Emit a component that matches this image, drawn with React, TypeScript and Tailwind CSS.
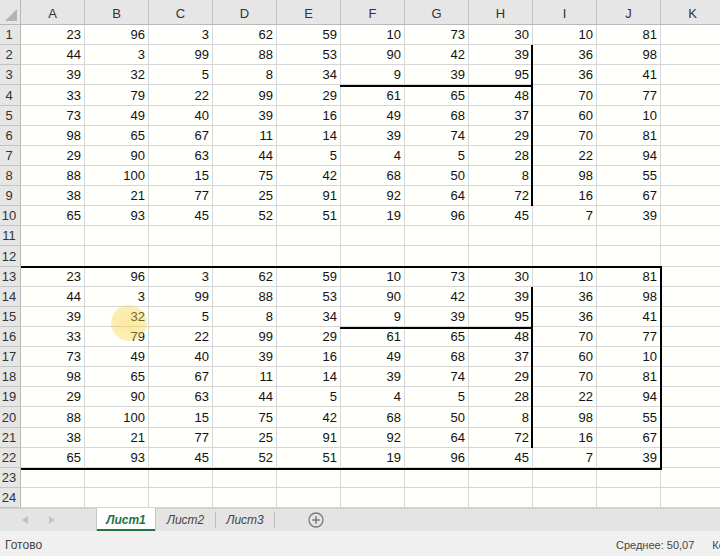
import React from "react";

const block: number[][] = [
  [23, 96, 3, 62, 59, 10, 73, 30, 10, 81],
  [44, 3, 99, 88, 53, 90, 42, 39, 36, 98],
  [39, 32, 5, 8, 34, 9, 39, 95, 36, 41],
  [33, 79, 22, 99, 29, 61, 65, 48, 70, 77],
  [73, 49, 40, 39, 16, 49, 68, 37, 60, 10],
  [98, 65, 67, 11, 14, 39, 74, 29, 70, 81],
  [29, 90, 63, 44, 5, 4, 5, 28, 22, 94],
  [88, 100, 15, 75, 42, 68, 50, 8, 98, 55],
  [38, 21, 77, 25, 91, 92, 64, 72, 16, 67],
  [65, 93, 45, 52, 51, 19, 96, 45, 7, 39],
];

const cols = ["A", "B", "C", "D", "E", "F", "G", "H", "I", "J", "K"];

function rowData(r: number): (number | null)[] {
  if (r >= 1 && r <= 10) return [...block[r - 1], null];
  if (r >= 13 && r <= 22) return [...block[r - 13], null];
  return Array(11).fill(null);
}

export default function App() {
  const rows = Array.from({ length: 24 }, (_, i) => i + 1);
  return (
    <div className="w-[720px] h-[556px] overflow-hidden flex flex-col bg-[#fffffb] font-['Liberation_Sans',Arial,sans-serif]">
      <div className="relative h-[508px] flex-none overflow-hidden">
        <div className="flex h-[25px] w-[800px]">
          <div className="relative w-[21px] flex-none bg-[#e6e6e6] border-r border-b border-[#b8b8b8]">
            <svg className="absolute right-[3px] bottom-[3px]" width="12" height="12" viewBox="0 0 12 12">
              <polygon points="12,0 12,12 0,12" fill="#b4b4b4" />
            </svg>
          </div>
          {cols.map((c) => (
            <div
              key={c}
              className="w-[64px] flex-none bg-[#e6e6e6] border-r border-b border-[#c4c4c4] border-b-[#b8b8b8] flex items-end justify-center pb-[3px] text-[13px] leading-[15px] text-[#333]"
            >
              {c}
            </div>
          ))}
        </div>
        {rows.map((r) => (
          <div key={r} className="flex h-[20.125px] w-[800px]">
            <div className="w-[21px] flex-none bg-[#e6e6e6] border-r border-b border-[#c4c4c4] border-r-[#b8b8b8] flex items-end justify-center pr-[2px] pb-[2px] text-[13px] leading-[15px] text-[#333]">
              {r}
            </div>
            {rowData(r).map((v, i) => (
              <div
                key={i}
                className="w-[64px] flex-none border-r border-b border-[#d6d6d6] flex items-end justify-end pr-[3px] pb-[2px] text-[13px] leading-[15px] text-[#111]"
              >
                {v === null ? "" : v}
              </div>
            ))}
          </div>
        ))}

        {/* thick borders, top block */}
        <div className="absolute left-[340px] top-[85px] w-[193px] h-[2px] bg-black" />
        <div className="absolute left-[531px] top-[45px] w-[2px] h-[161px] bg-black" />

        {/* thick borders, bottom block */}
        <div className="absolute left-[21px] top-[266px] w-[641px] h-[2px] bg-black" />
        <div className="absolute left-[660px] top-[266px] w-[2px] h-[204px] bg-black" />
        <div className="absolute left-[21px] top-[468px] w-[641px] h-[2px] bg-black" />
        <div className="absolute left-[340px] top-[327px] w-[193px] h-[2px] bg-black" />
        <div className="absolute left-[531px] top-[287px] w-[2px] h-[161px] bg-black" />

        {/* pointer highlight */}
        <div className="absolute left-[111px] top-[305px] w-[36px] h-[36px] rounded-full bg-[radial-gradient(circle,rgba(248,210,70,0.5)_0%,rgba(248,210,70,0.38)_65%,rgba(248,210,70,0.1)_100%)]" />
      </div>

      {/* sheet tabs */}
      <div className="flex h-[23px] flex-none bg-[#e4e4e4] border-t border-[#cfcfcf]">
        <div className="w-[96px] flex-none flex items-center">
          <svg className="ml-[22px]" width="6" height="8" viewBox="0 0 6 8">
            <polygon points="6,0 6,8 0,4" fill="#c2c2c2" />
          </svg>
          <svg className="ml-[21px]" width="6" height="8" viewBox="0 0 6 8">
            <polygon points="0,0 0,8 6,4" fill="#c2c2c2" />
          </svg>
        </div>
        <div className="relative w-[60px] flex-none bg-white border-x border-[#c6c6c6] mt-[-1px] flex items-center justify-center text-[12px] font-bold italic text-[#217346]">
          Лист1
          <div className="absolute left-0 right-0 bottom-0 h-[2px] bg-[#217346]" />
        </div>
        <div className="w-[59px] flex-none flex items-center justify-center text-[12px] italic text-[#444]">
          <span>Лист2</span>
        </div>
        <div className="w-[1px] flex-none my-[3px] bg-[#bdbdbd]" />
        <div className="w-[58px] flex-none flex items-center justify-center text-[12px] italic text-[#444]">
          <span>Лист3</span>
        </div>
        <div className="w-[1px] flex-none my-[3px] bg-[#bdbdbd]" />
        <div className="ml-[33px] flex items-center">
          <svg width="16" height="16" viewBox="0 0 16 16">
            <circle cx="8" cy="8" r="7" fill="none" stroke="#7a7a7a" strokeWidth="1.3" />
            <path d="M8 4.2v7.6M4.2 8h7.6" stroke="#7a7a7a" strokeWidth="1.5" />
          </svg>
        </div>
      </div>

      {/* status bar */}
      <div className="flex h-[25px] flex-none items-center bg-[#f0f0f0] pt-[3px] text-[11px] text-[#444] whitespace-nowrap overflow-hidden">
        <span className="w-[616px] flex-none pl-[5px] text-[12px]">Готово</span>
        <span className="flex-none">Среднее: 50,07</span>
        <span className="flex-none ml-[18px]">Количество: 200</span>
      </div>
    </div>
  );
}
